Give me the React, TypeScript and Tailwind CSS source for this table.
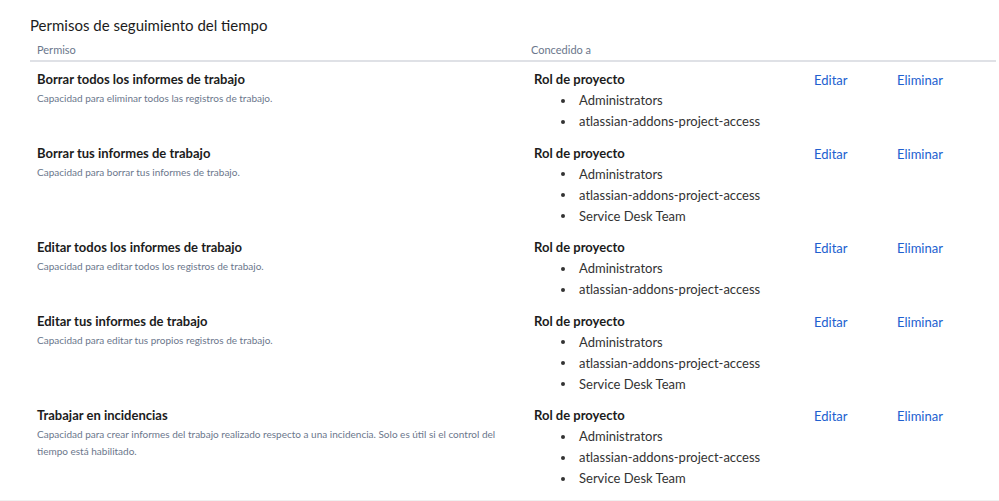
type Perm = {
  title: string;
  desc: string;
  members: string[];
};

const withTeam = ["Administrators", "atlassian-addons-project-access", "Service Desk Team"];
const noTeam = ["Administrators", "atlassian-addons-project-access"];

const permissions: Perm[] = [
  {
    title: "Borrar todos los informes de trabajo",
    desc: "Capacidad para eliminar todos las registros de trabajo.",
    members: noTeam,
  },
  {
    title: "Borrar tus informes de trabajo",
    desc: "Capacidad para borrar tus informes de trabajo.",
    members: withTeam,
  },
  {
    title: "Editar todos los informes de trabajo",
    desc: "Capacidad para editar todos los registros de trabajo.",
    members: noTeam,
  },
  {
    title: "Editar tus informes de trabajo",
    desc: "Capacidad para editar tus propios registros de trabajo.",
    members: withTeam,
  },
  {
    title: "Trabajar en incidencias",
    desc: "Capacidad para crear informes del trabajo realizado respecto a una incidencia. Solo es útil si el control del tiempo está habilitado.",
    members: withTeam,
  },
];

export default function App() {
  return (
    <div className="h-[501px] w-[999px] overflow-hidden bg-white font-['Lato',sans-serif] text-[#1c1c1c]">
      <div className="pl-[30px] pr-[3px]">
        <h2 className="pt-[15px] text-[15px] leading-[20px] text-[#1c1c1c]">Permisos de seguimiento del tiempo</h2>

        <div className="mt-[7px] grid grid-cols-[494px_283px_83px_1fr] border-b-2 border-[#dfe1e6] pb-[2px] text-[11px] leading-[16px] text-[#6b778c]">
          <div className="px-[7px]">Permiso</div>
          <div className="px-[7px]">Concedido a</div>
          <div />
          <div />
        </div>

        <div className="pt-[7px]">
          {permissions.map((p) => (
            <div key={p.title} className="grid grid-cols-[494px_283px_83px_1fr] pb-[10.5px]">
              <div className="px-[7px]">
                <p className="text-[13px] font-bold leading-[21px]">{p.title}</p>
                <p className="pr-[5px] text-[10px] leading-[17px] text-[#6b778c]">{p.desc}</p>
              </div>
              <div className="pl-[10px] pr-[7px]">
                <p className="text-[13px] font-bold leading-[21px]">Rol de proyecto</p>
                <ul className="text-[13px] leading-[21px] text-[#333]">
                  {p.members.map((m) => (
                    <li key={m} className="flex items-center">
                      <span className="ml-[27px] mr-[14px] h-[4px] w-[4px] rounded-full bg-[#333]" />
                      {m}
                    </li>
                  ))}
                </ul>
              </div>
              <div className="px-[7px] pt-[3px]">
                <a href="#" className="block text-[13px] leading-[17px] text-[#2160cf]">
                  Editar
                </a>
              </div>
              <div className="px-[7px] pt-[3px]">
                <a href="#" className="block text-[13px] leading-[17px] text-[#2160cf]">
                  Eliminar
                </a>
              </div>
            </div>
          ))}
        </div>
      </div>
      <div className="border-t-2 border-[#f0f0f0]" />
    </div>
  );
}
